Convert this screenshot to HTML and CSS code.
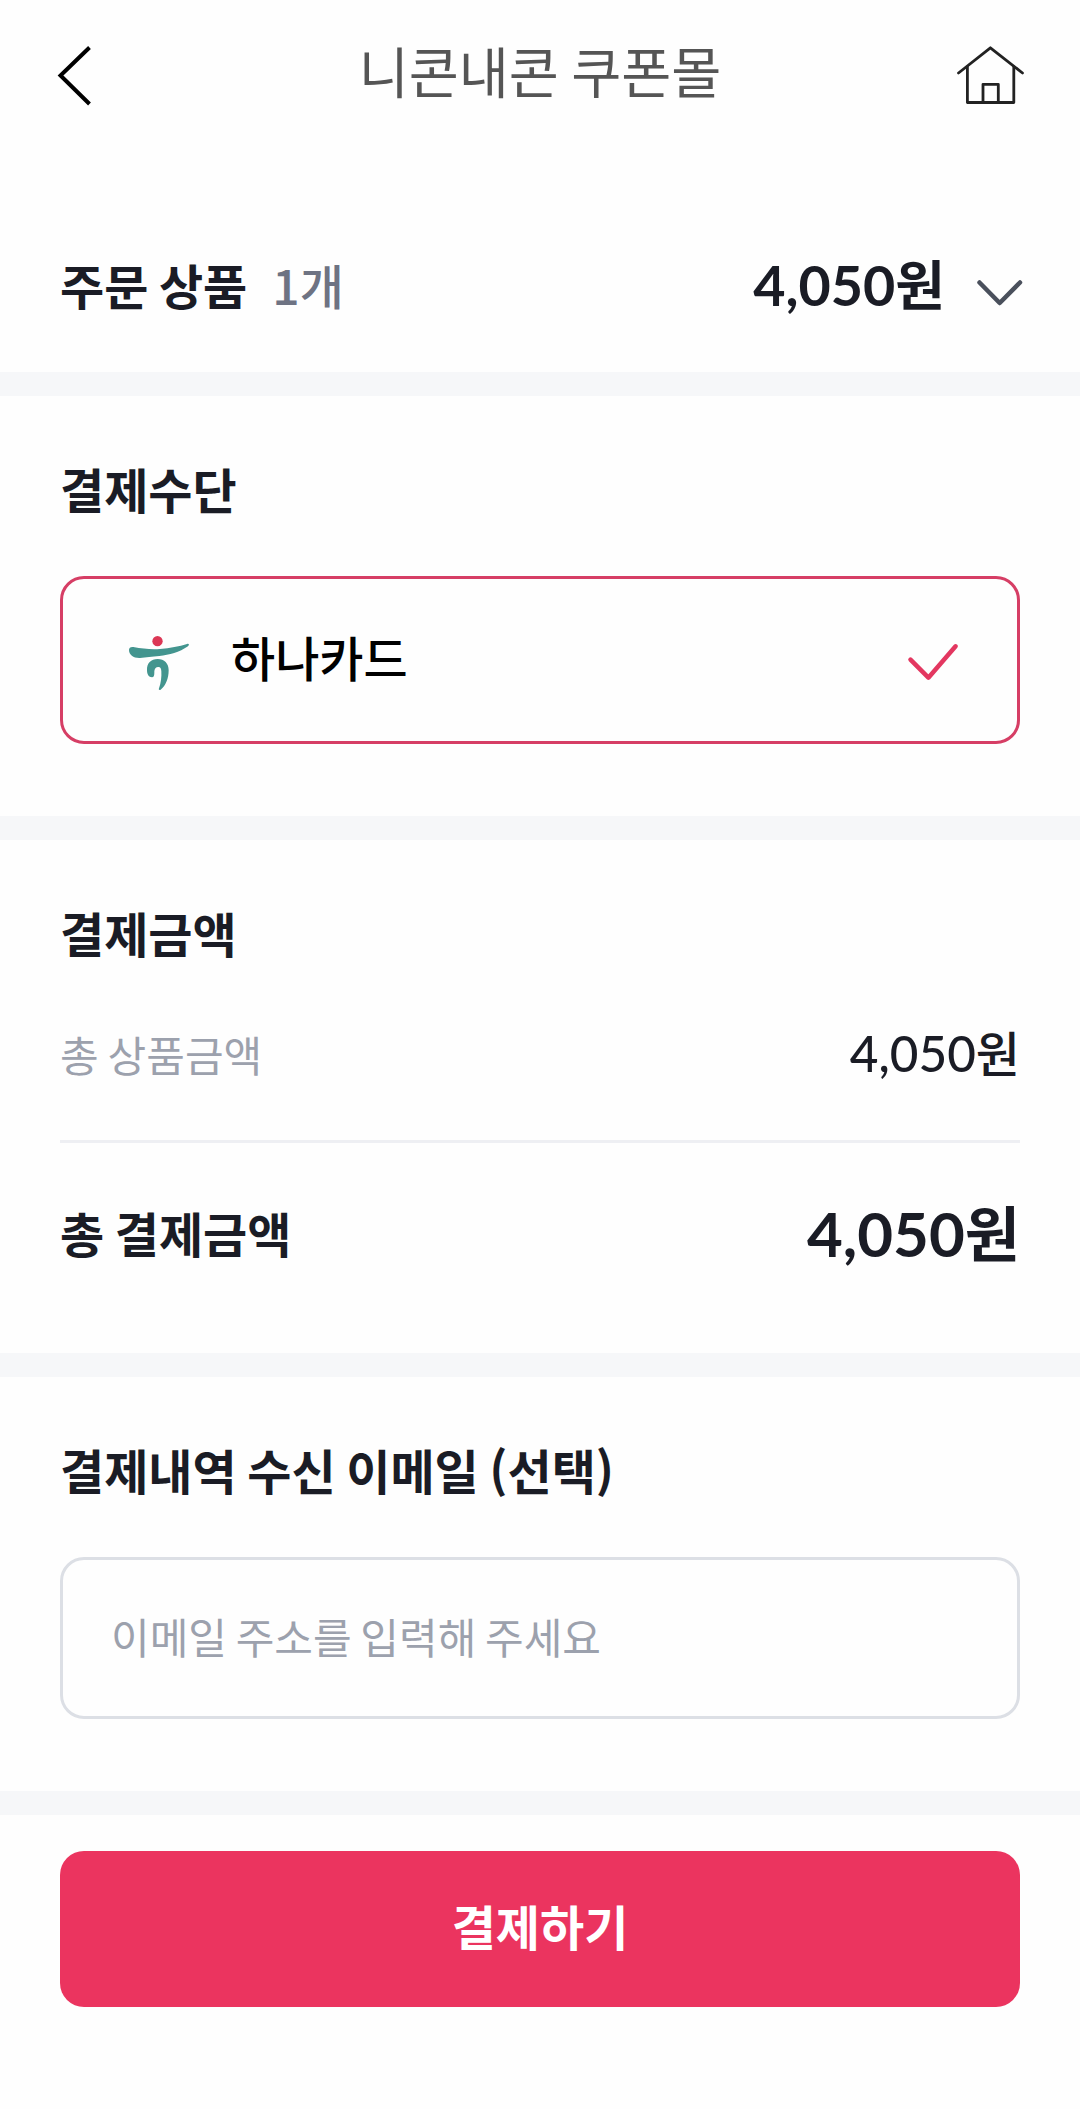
FILE: index.html
```html
<!DOCTYPE html>
<html lang="ko">
<head>
    <meta charset="UTF-8">
    <meta name="viewport" content="width=device-width, initial-scale=1.0">
    <title>니콘내콘 쿠폰몰</title>
    <link rel="stylesheet" href="styles.css">
</head>
<body>

    <header class="header">
        <a class="back">
            <svg width="40" height="64" viewBox="54 44 40 64">
                <path d="M89.5 47.5L60.5 75.5L89.5 104" fill="none" stroke="#000" stroke-width="4"/>
            </svg>
        </a>
        <h1 class="title">니콘내콘 쿠폰몰</h1>
        <a class="home">
            <svg width="72" height="64" viewBox="954 44 72 64">
                <g fill="none" stroke="#222" stroke-width="2.8" stroke-linecap="round" stroke-linejoin="round">
                    <path d="M958.5 73L990.4 47.8L1022.5 73"/>
                    <path d="M967.4 67V102.5H1013.8V67"/>
                    <path d="M983 102V84.3H998.3V102"/>
                </g>
            </svg>
        </a>
    </header>

    <section class="order">
        <h2>주문 상품</h2>
        <span class="count">1개</span>
        <span class="price order-price"><span class="num">4,050</span>원</span>
        <svg class="arrow" width="49" height="30" viewBox="975 278 49 30">
            <path d="M979.5 282.5L999.7 303L1020 282.5" fill="none" stroke="#4a505c" stroke-width="4.5" stroke-linecap="round" stroke-linejoin="round"/>
        </svg>
    </section>

    <section class="section">
        <h2>결제수단</h2>
        <div class="card">
            <svg width="65" height="66" viewBox="51 21 195 198">
                <circle cx="142.5" cy="63.5" r="15.5" fill="#dc3755"/>
                <path fill="#43958f" d="M57 90C57 83 62 80 70 81C98 86 122 89 150 87C180 85 208 79 231 72C237 70 239 75 234 79C208 97 178 105 148 108C126 110 108 112 90 114C71 115 57 104 57 90Z"/>
                <path fill="#43958f" d="M111 151C110 129 123 117 143 117C163 117 176 130 176 151C176 175 167 198 152 209C148 212 145 209 147 205C153 190 155 170 154 154C154 144 150 140 144 141C135 142 133 149 133 158C133 167 131 172 126 172C116 172 111 162 111 151Z"/>
            </svg>
            <span class="card-name">하나카드</span>
            <svg class="check" width="54" height="48" viewBox="906 636 54 48">
                <path d="M910.5 659.7L928.4 677.7L955.6 646.3" fill="none" stroke="#e33760" stroke-width="4.5" stroke-linecap="round" stroke-linejoin="round"/>
            </svg>
        </div>
    </section>

    <section class="section amount">
        <h2>결제금액</h2>
        <div class="row">
            <span class="label">총 상품금액</span>
            <span class="price"><span class="num">4,050</span>원</span>
        </div>
        <div class="row total">
            <h2>총 결제금액</h2>
            <span class="price total-price"><span class="num">4,050</span>원</span>
        </div>
    </section>

    <section class="section">
        <h2>결제내역 수신 이메일 (선택)</h2>
        <input class="email" type="email" placeholder="이메일 주소를 입력해 주세요">
    </section>

    <footer class="footer">
        <button class="pay">결제하기</button>
    </footer>

</body>
</html>
```
FILE: styles.css
```css
* {
    box-sizing: border-box;
}

body {
    margin: 0;
    background: #fefefe;
    color: #1a1c25;
    font-family: "Noto Sans CJK KR", sans-serif;
    word-spacing: -2.8px;
}

svg {
    display: block;
    flex-shrink: 0;
}

h1, h2 {
    margin: 0;
}

h2 {
    font-size: 48px;
    font-weight: 700;
    line-height: 64px;
}

.header {
    display: grid;
    grid-template-columns: 1fr auto 1fr;
    align-items: center;
    height: 152px;
    padding: 0 54px;
}

.title {
    padding-bottom: 12px;
    font-size: 54.4px;
    font-weight: 400;
    line-height: 72px;
    color: #555;
}

.home {
    justify-self: end;
}

.order {
    display: flex;
    align-items: center;
    height: 220px;
    padding: 44px 56px 0 60px;
}

.count {
    margin-left: 25px;
    font-size: 48px;
    font-weight: 500;
    line-height: 62px;
    color: #6e7383;
}

.price {
    font-size: 48px;
    font-weight: 500;
    line-height: 62px;
}

/* digits are set in a different face than the hangul */
.num {
    font-family: Lato, sans-serif;
    font-size: 1.03em;
}

.order-price {
    margin-left: auto;
    font-size: 54px;
    font-weight: 700;
}

.arrow {
    margin: 18px 0 0 30px;
}

.section {
    padding: 60px 60px 72px;
    border-top: 24px solid #f6f7f9;
}

.card {
    display: flex;
    align-items: center;
    height: 168px;
    margin-top: 56px;
    padding: 0 57px 0 64px;
    border: 3px solid #d63e65;
    border-radius: 24px;
}

.card-name {
    margin-left: 39px;
    padding-bottom: 9px;
    font-size: 48px;
    font-weight: 500;
    line-height: 62px;
    color: #000;
}

.check {
    margin-left: auto;
}

.amount {
    padding-bottom: 86px;
}

.row {
    display: flex;
    align-items: center;
    justify-content: space-between;
    height: 60px;
    margin-top: 58px;
}

.label {
    font-size: 42px;
    line-height: 60px;
    padding-top: 3px;
    color: #9ca1ad;
}

.total {
    height: 127px;
    padding-top: 53px;
    border-top: 3px solid #eeeff3;
}

.total-price {
    font-size: 60px;
    font-weight: 700;
}

.email {
    display: block;
    width: 100%;
    height: 162px;
    margin-top: 56px;
    padding: 0 48px 6px;
    border: 3px solid #dcdfe5;
    border-radius: 24px;
    background: transparent;
    font-family: inherit;
    font-size: 42px;
    word-spacing: -3px;
}

.email::placeholder {
    color: #9ca1ad;
}

.footer {
    padding: 36px 60px 102px;
    border-top: 24px solid #f6f7f9;
}

.pay {
    display: block;
    width: 100%;
    height: 156px;
    padding: 0 0 8px;
    border: none;
    border-radius: 24px;
    background: #eb345f;
    color: #fff;
    font-family: inherit;
    font-size: 48px;
    font-weight: 700;
}
```
